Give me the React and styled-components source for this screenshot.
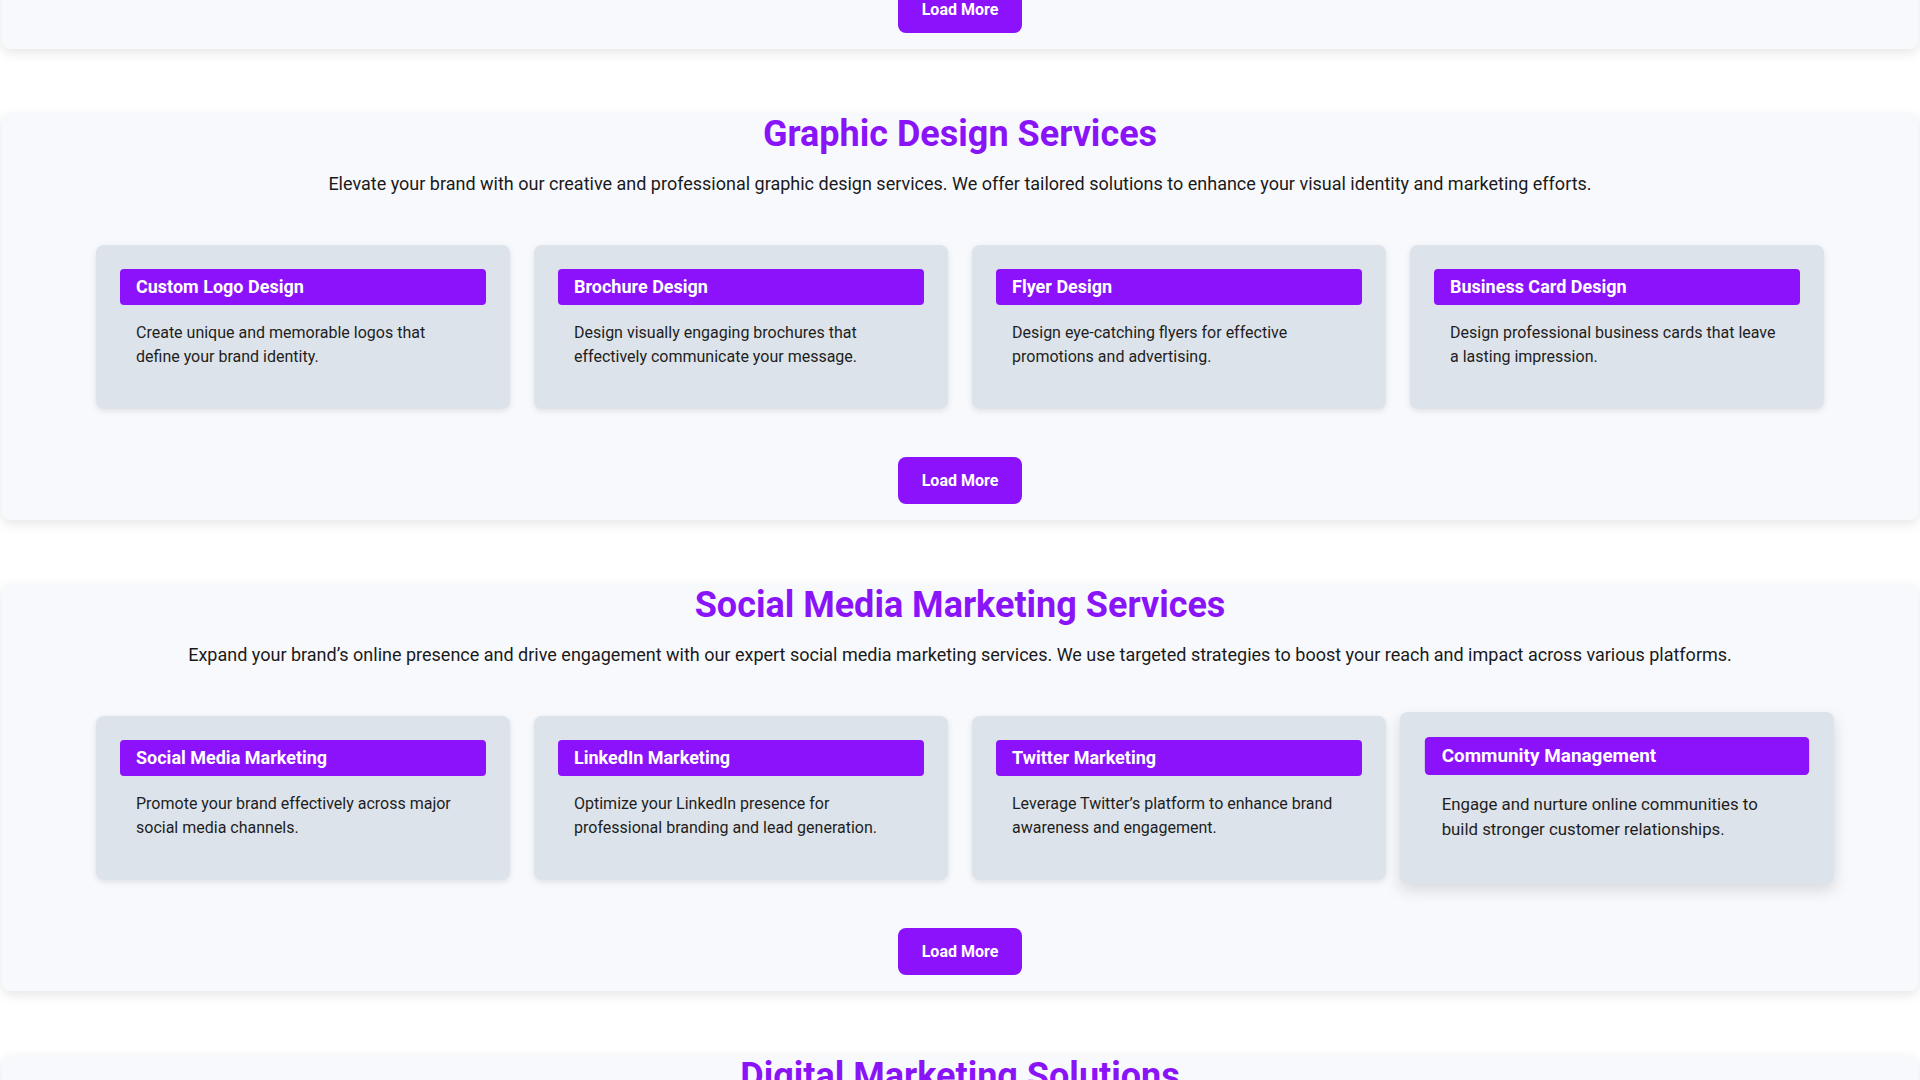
import React from 'react'
import styled, { createGlobalStyle } from 'styled-components'

const GlobalStyle = createGlobalStyle`
    html, body {
        margin : 0;
        padding : 0;
        overflow : hidden;
        background : #FFFFFF;
        font-family : Roboto, "Liberation Sans", Arial, sans-serif;
        color : #222;
    }
`

// All the service blocks shown on the page
const sections = [
    {
        title : 'Web Development Services',
        intro : 'Build fast, secure and scalable websites with our experienced web development team. We craft solutions that grow with your business.',
        items : [
            { name : 'Custom Websites', text : 'Tailor-made websites built around your goals and your audience.' },
            { name : 'E-commerce Stores', text : 'Online stores that make selling simple and buying effortless.' },
            { name : 'Web Applications', text : 'Robust web apps designed for performance and reliability.' },
            { name : 'Website Maintenance', text : 'Keep your site updated, secure and running smoothly.' },
        ],
    },
    {
        title : 'Graphic Design Services',
        intro : 'Elevate your brand with our creative and professional graphic design services. We offer tailored solutions to enhance your visual identity and marketing efforts.',
        items : [
            { name : 'Custom Logo Design', text : 'Create unique and memorable logos that define your brand identity.' },
            { name : 'Brochure Design', text : 'Design visually engaging brochures that effectively communicate your message.' },
            { name : 'Flyer Design', text : 'Design eye-catching flyers for effective promotions and advertising.' },
            { name : 'Business Card Design', text : 'Design professional business cards that leave a lasting impression.' },
        ],
    },
    {
        title : 'Social Media Marketing Services',
        intro : 'Expand your brand\u2019s online presence and drive engagement with our expert social media marketing services. We use targeted strategies to boost your reach and impact across various platforms.',
        items : [
            { name : 'Social Media Marketing', text : 'Promote your brand effectively across major social media channels.' },
            { name : 'LinkedIn Marketing', text : 'Optimize your LinkedIn presence for professional branding and lead generation.' },
            { name : 'Twitter Marketing', text : 'Leverage Twitter\u2019s platform to enhance brand awareness and engagement.' },
            { name : 'Community Management', text : 'Engage and nurture online communities to build stronger customer relationships.', hovered : true },
        ],
    },
    {
        title : 'Digital Marketing Solutions',
        intro : 'Grow your business with data-driven digital marketing solutions that attract, convert and retain customers.',
        items : [
            { name : 'Search Engine Optimization', text : 'Improve your rankings and get found by the right customers.' },
            { name : 'Pay-Per-Click Ads', text : 'Targeted ad campaigns that deliver measurable results.' },
            { name : 'Email Marketing', text : 'Engaging campaigns that nurture leads and build loyalty.' },
            { name : 'Content Marketing', text : 'Valuable content that tells your story and drives traffic.' },
        ],
    },
]

function ServiceCard({item}){
    return(
        <Card hovered={item.hovered}>
            <CardTitle>{item.name}</CardTitle>
            <CardText>{item.text}</CardText>
        </Card>
    )
}

function ServiceSection({section, first}){
    return(
        <Section first={first}>
            <Title>{section.title}</Title>
            <Intro>{section.intro}</Intro>
            <CardGrid>
                {section.items.map((item) => (
                    <ServiceCard key={item.name} item={item} />
                ))}
            </CardGrid>
            <LoadMore>Load More</LoadMore>
        </Section>
    )
}

function App(){
    return(
        <Page>
            <GlobalStyle />
            {sections.map((section, i) => (
                <ServiceSection key={section.title} section={section} first={i === 0} />
            ))}
        </Page>
    )
}

export default App

const Page = styled.div`
    display : flex;
    flex-direction : column;
    gap : 64px;
    padding-bottom : 64px;
`
const Section = styled.section`
    display : flex;
    flex-direction : column;
    align-items : center;
    margin : ${props => props.first ? '-358px 2px 0' : '0 2px'};
    padding : 3px 0 16px;
    background : #F8F9FD;
    border-radius : 8px;
    box-shadow : 0 4px 12px rgba(0, 0, 0, 0.1);
`
const Title = styled.h2`
    margin : 0;
    font-size : 36px;
    line-height : 1;
    font-weight : 700;
    color : #8A14F8;
`
const Intro = styled.p`
    margin : 20px 0 0;
    font-size : 18px;
    line-height : 24px;
    color : #1A1A1A;
    text-align : center;
`
const CardGrid = styled.div`
    display : grid;
    grid-template-columns : repeat(4, 1fr);
    gap : 24px;
    width : 100%;
    max-width : 1728px;
    margin-top : 49px;
`
const Card = styled.div`
    padding : 24px;
    background : #DDE3EA;
    border-radius : 8px;
    box-shadow : ${props => props.hovered ? '0 6px 14px rgba(0, 0, 0, 0.12)' : '0 2px 6px rgba(0, 0, 0, 0.1)'};
    transform : ${props => props.hovered ? 'scale(1.05)' : 'none'};
`
const CardTitle = styled.h3`
    margin : 0;
    padding : 8px 16px;
    font-size : 18px;
    line-height : 20px;
    font-weight : 700;
    color : #FFFFFF;
    background : #8C12FC;
    border-radius : 4px;
`
const CardText = styled.p`
    margin : 16px 0;
    padding : 0 16px;
    font-size : 16px;
    line-height : 24px;
    color : #1E1E1E;
`
const LoadMore = styled.button`
    margin-top : 48px;
    padding : 14px 24px;
    font-family : inherit;
    font-size : 16px;
    font-weight : 700;
    color : #FFFFFF;
    background : #8C12FC;
    border : none;
    border-radius : 8px;
    cursor : pointer;
`
